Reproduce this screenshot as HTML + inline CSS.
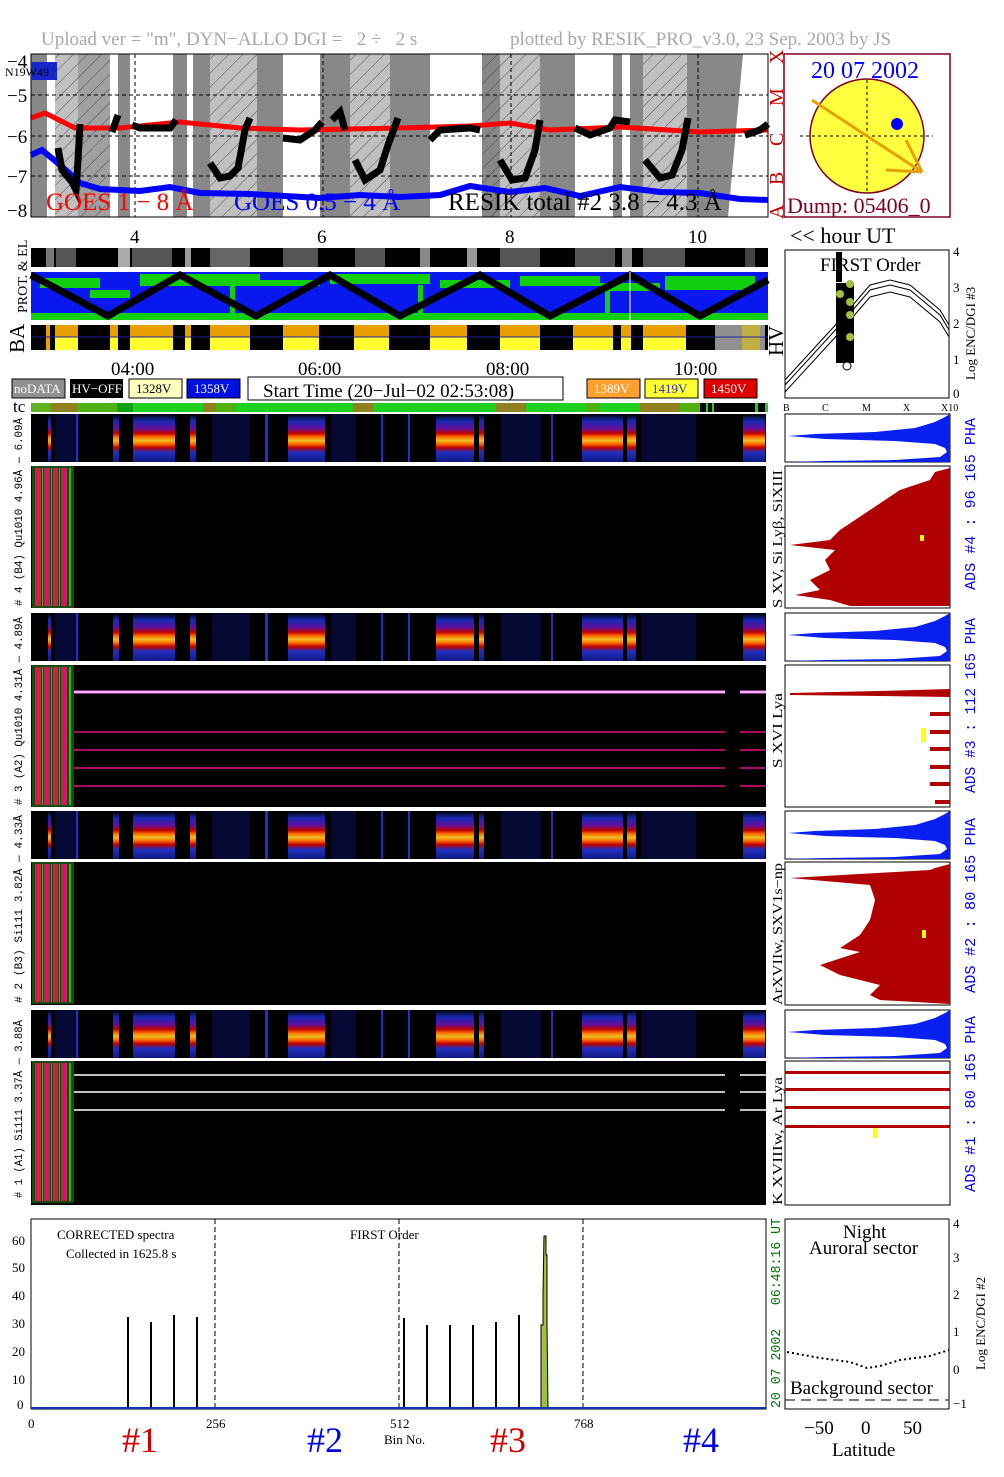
<!DOCTYPE html>
<html><head><meta charset="utf-8"><style>
html,body{margin:0;padding:0;background:#fff;}
svg{display:block;font-family:"Liberation Serif","DejaVu Serif",serif;}
</style></head><body>
<svg width="1004" height="1477" viewBox="0 0 1004 1477" xmlns="http://www.w3.org/2000/svg">
<defs>
<pattern id="hat" width="10" height="10" patternUnits="userSpaceOnUse" patternTransform="rotate(45)"><rect width="10" height="10" fill="none"/><line x1="0" y1="0" x2="0" y2="10" stroke="#333" stroke-width="0.8"/></pattern>
<linearGradient id="ga" x1="0" y1="0" x2="0" y2="1">
<stop offset="0" stop-color="#000"/><stop offset="0.15" stop-color="#1828b0"/><stop offset="0.3" stop-color="#6010a0"/><stop offset="0.4" stop-color="#c00000"/><stop offset="0.48" stop-color="#ff7000"/><stop offset="0.55" stop-color="#e8c020"/><stop offset="0.62" stop-color="#ff7000"/><stop offset="0.7" stop-color="#c00000"/><stop offset="0.8" stop-color="#2030c0"/><stop offset="1" stop-color="#101880"/></linearGradient>
<g id="pha">
<rect x="0" y="0" width="735" height="48" fill="#000"/>
<rect x="24" y="0" width="24" height="48" fill="#0a1470" opacity="0.45"/>
<rect x="181" y="0" width="38" height="48" fill="#0a1470" opacity="0.45"/>
<rect x="300" y="0" width="25" height="48" fill="#0a1470" opacity="0.45"/>
<rect x="470" y="0" width="40" height="48" fill="#0a1470" opacity="0.45"/>
<rect x="610" y="0" width="55" height="48" fill="#0a1470" opacity="0.45"/>
<rect x="102" y="0" width="42" height="48" fill="url(#ga)"/>
<rect x="257" y="0" width="37" height="48" fill="url(#ga)"/>
<rect x="405" y="0" width="38" height="48" fill="url(#ga)"/>
<rect x="551" y="0" width="41" height="48" fill="url(#ga)"/>
<rect x="17" y="0" width="3" height="48" fill="url(#ga)"/>
<rect x="82" y="0" width="6" height="48" fill="url(#ga)"/>
<rect x="159" y="0" width="6" height="48" fill="url(#ga)"/>
<rect x="448" y="0" width="5" height="48" fill="url(#ga)"/>
<rect x="596" y="0" width="9" height="48" fill="url(#ga)"/>
<rect x="712" y="0" width="22" height="48" fill="url(#ga)"/>
<rect x="45" y="0" width="2" height="48" fill="#2030c0"/>
<rect x="234" y="0" width="3" height="48" fill="#2030c0"/>
<rect x="350" y="0" width="2" height="48" fill="#2030c0"/>
<rect x="377" y="0" width="2" height="48" fill="#2030c0"/>
<rect x="520" y="0" width="2" height="48" fill="#2030c0"/>
</g>
<g id="strip">
<rect x="0" y="0" width="42" height="142" fill="#1a4a10"/>
<rect x="3" y="2" width="6" height="138" fill="#d0204a"/>
<rect x="12" y="2" width="6" height="138" fill="#c81e60"/>
<rect x="21" y="2" width="5" height="138" fill="#d0204a"/>
<rect x="29" y="2" width="6" height="138" fill="#c81e60"/>
<rect x="10" y="2" width="1" height="138" fill="#20c020"/>
<rect x="19" y="2" width="1" height="138" fill="#20c020"/>
<rect x="27" y="2" width="1" height="138" fill="#20c020"/>
<rect x="37" y="2" width="2" height="138" fill="#20c020"/>
</g>
<g id="rpha">
<rect x="0" y="0" width="165" height="48" fill="#fff" stroke="#000"/>
<polygon points="165,0 160,3 150,8 130,14 90,18 30,20 3,22 40,25 110,27 150,30 160,34 162,38 155,43 110,46 40,47 0,48 165,48" fill="#0a20f0"/>
</g>
</defs>

<text x="41" y="45" font-size="19" fill="#a8a8a8" xml:space="preserve">Upload ver = "m", DYN−ALLO DGI =   2 ÷   2 s</text>
<text x="510" y="45" font-size="19" fill="#a8a8a8">plotted by RESIK_PRO_v3.0, 23 Sep. 2003 by JS</text>

<rect x="31" y="54" width="737" height="163" fill="#fff"/>
<g>
<rect x="31" y="54" width="16" height="163" fill="#888"/>
<rect x="55" y="54" width="23" height="163" fill="#c0c0c0"/>
<rect x="78" y="54" width="32" height="163" fill="#a0a0a0"/>
<rect x="118" y="54" width="12" height="163" fill="#888"/>
<rect x="173" y="54" width="14" height="163" fill="#888"/>
<rect x="193" y="54" width="17" height="163" fill="#888"/>
<rect x="210" y="54" width="47" height="163" fill="#c0c0c0"/>
<rect x="257" y="54" width="26" height="163" fill="#888"/>
<rect x="320" y="54" width="30" height="163" fill="#888"/>
<rect x="350" y="54" width="40" height="163" fill="#c0c0c0"/>
<rect x="390" y="54" width="40" height="163" fill="#888"/>
<rect x="482" y="54" width="18" height="163" fill="#888"/>
<rect x="500" y="54" width="40" height="163" fill="#c0c0c0"/>
<rect x="540" y="54" width="35" height="163" fill="#888"/>
<rect x="613" y="54" width="9" height="163" fill="#888"/>
<rect x="630" y="54" width="13" height="163" fill="#888"/>
<rect x="643" y="54" width="44" height="163" fill="#c0c0c0"/>
<rect x="687" y="54" width="26" height="163" fill="#888"/>
<polygon points="713,54 743,54 728,217 713,217" fill="#888"/>
<rect x="55" y="54" width="55" height="163" fill="url(#hat)"/>
<rect x="210" y="54" width="47" height="163" fill="url(#hat)"/>
<rect x="350" y="54" width="40" height="163" fill="url(#hat)"/>
<rect x="482" y="54" width="58" height="163" fill="url(#hat)"/>
<rect x="643" y="54" width="44" height="163" fill="url(#hat)"/>
</g>
<g stroke="#000" stroke-dasharray="4,3" stroke-width="1" fill="none">
<line x1="31" y1="95" x2="768" y2="95"/><line x1="31" y1="136" x2="768" y2="136"/><line x1="31" y1="176" x2="768" y2="176"/>
<line x1="135" y1="54" x2="135" y2="217"/><line x1="323" y1="54" x2="323" y2="217"/><line x1="511" y1="54" x2="511" y2="217"/><line x1="698" y1="54" x2="698" y2="217"/>
</g>
<polyline points="31,118 45,113 75,128 120,128 180,122 240,128 300,130 400,128 470,126 510,123 550,130 620,127 700,132 768,130" fill="none" stroke="#ff0000" stroke-width="5"/>
<polyline points="31,155 42,150 60,165 80,183 100,189 140,191 170,187 200,193 250,194 320,198 360,195 400,197 440,195 470,186 510,192 545,188 580,196 620,187 660,192 700,193 740,199 768,200" fill="none" stroke="#0000ff" stroke-width="6"/>
<g fill="none" stroke="#000" stroke-width="7">
<polyline points="58,148 62,170 72,182 76,190 78,160 80,124"/>
<polyline points="112,132 118,115"/>
<polyline points="132,125 140,128 170,128 176,120"/>
<polyline points="210,163 220,178 230,176 238,168 245,130 250,118"/>
<polyline points="283,138 300,140 315,130 322,122"/>
<polyline points="332,120 340,112 345,130"/>
<polyline points="355,160 365,180 380,170 388,145 398,118"/>
<polyline points="430,140 440,130 470,128 480,130"/>
<polyline points="500,160 512,180 525,178 535,150 540,120"/>
<polyline points="575,128 590,135 610,128 615,120 630,122"/>
<polyline points="645,160 660,178 672,175 682,150 688,118"/>
<polyline points="745,135 760,130 768,124"/>
</g>
<rect x="31" y="54" width="737" height="163" fill="none" stroke="#000"/>
<g font-size="19" fill="#000">
<text x="7" y="68">−4</text><text x="7" y="102">−5</text><text x="7" y="143">−6</text><text x="7" y="183">−7</text><text x="7" y="217">−8</text>
</g>
<rect x="31" y="62" width="26" height="18" fill="#1828c8"/>
<text x="5" y="76" font-size="12" fill="#000">N19W49</text>
<text x="46" y="210" font-size="25" fill="#ff0000">GOES 1 − 8 Å</text>
<text x="234" y="210" font-size="25" fill="#0000ff">GOES 0.5 − 4 Å</text>
<text x="448" y="210" font-size="25" fill="#000">RESIK total #2  3.8 − 4.3 Å</text>
<g font-size="20" fill="#c00000">
<text transform="translate(783,219) rotate(-90)">A</text>
<text transform="translate(783,185) rotate(-90)">B</text>
<text transform="translate(783,146) rotate(-90)">C</text>
<text transform="translate(783,106) rotate(-90)">M</text>
<text transform="translate(783,64) rotate(-90)">X</text>
</g>

<rect x="784" y="54" width="166" height="163" fill="#fff" stroke="#800020" stroke-width="1.5"/>
<text x="811" y="78" font-size="24" fill="#0000ff">20 07 2002</text>
<circle cx="867" cy="136" r="57" fill="#ffff40" stroke="#800020" stroke-width="1.5"/>
<line x1="800" y1="136" x2="933" y2="136" stroke="#000" stroke-dasharray="3,3"/>
<line x1="867" y1="80" x2="867" y2="192" stroke="#000" stroke-dasharray="3,3"/>
<line x1="812" y1="100" x2="922" y2="172" stroke="#e8a000" stroke-width="3"/>
<line x1="906" y1="140" x2="922" y2="172" stroke="#e8a000" stroke-width="3"/>
<line x1="886" y1="170" x2="922" y2="172" stroke="#e8a000" stroke-width="3"/>
<circle cx="897" cy="124" r="6" fill="#0000ff"/>
<text x="787" y="213" font-size="22" fill="#800020">Dump: 05406_0</text>

<g font-size="19" fill="#000">
<text x="130" y="243">4</text><text x="317" y="243">6</text><text x="505" y="243">8</text><text x="688" y="243">10</text>
<text x="790" y="243" font-size="22">&lt;&lt; hour UT</text>
<text x="111" y="375">04:00</text><text x="298" y="375">06:00</text><text x="486" y="375">08:00</text><text x="674" y="375">10:00</text>
</g>

<rect x="31" y="248" width="737" height="19" fill="#000"/>
<g fill="#777">
<rect x="46" y="248" width="8" height="19"/><rect x="56" y="248" width="20" height="19" fill="#555"/>
<rect x="118" y="248" width="12" height="19" fill="#aaa"/><rect x="132" y="248" width="40" height="19" fill="#555"/>
<rect x="185" y="248" width="6" height="19" fill="#999"/><rect x="210" y="248" width="40" height="19" fill="#666"/>
<rect x="283" y="248" width="35" height="19" fill="#555"/><rect x="355" y="248" width="30" height="19" fill="#555"/>
<rect x="420" y="248" width="10" height="19" fill="#888"/><rect x="467" y="248" width="10" height="19" fill="#999"/>
<rect x="500" y="248" width="40" height="19" fill="#555"/><rect x="575" y="248" width="40" height="19" fill="#555"/>
<rect x="622" y="248" width="10" height="19" fill="#888"/><rect x="643" y="248" width="42" height="19" fill="#555"/>
<rect x="745" y="248" width="10" height="19" fill="#444"/>
</g>
<rect x="31" y="272" width="737" height="48" fill="#0a18f0"/>
<rect x="31" y="313" width="737" height="7" fill="#10d010"/>
<g fill="#10d010">
<rect x="40" y="278" width="60" height="10"/><rect x="90" y="290" width="40" height="8"/><rect x="140" y="274" width="120" height="12"/>
<rect x="260" y="280" width="60" height="6"/><rect x="330" y="274" width="100" height="10"/><rect x="440" y="280" width="70" height="8"/>
<rect x="520" y="276" width="80" height="10"/><rect x="600" y="283" width="60" height="8"/><rect x="665" y="276" width="90" height="14"/>
<rect x="230" y="285" width="5" height="28"/><rect x="418" y="285" width="5" height="28"/><rect x="605" y="285" width="5" height="28"/>
</g>
<polyline points="31,275 108,316 180,275 256,316 330,275 400,316 480,275 550,316 630,275 700,316 768,280" fill="none" stroke="#000" stroke-width="7"/>
<line x1="630" y1="272" x2="630" y2="320" stroke="#fff"/>
<rect x="31" y="325" width="737" height="25" fill="#000"/>
<g>
<rect x="46" y="325" width="4" height="25" fill="#e8a000"/>
<rect x="55" y="325" width="23" height="12" fill="#e8a000"/><rect x="55" y="337" width="23" height="13" fill="#ffff30"/>
<rect x="110" y="325" width="8" height="12" fill="#e8a000"/><rect x="110" y="337" width="8" height="13" fill="#ffff30"/>
<rect x="130" y="325" width="43" height="12" fill="#e8a000"/><rect x="130" y="337" width="43" height="13" fill="#ffff30"/>
<rect x="185" y="325" width="6" height="12" fill="#e8a000"/><rect x="185" y="337" width="6" height="13" fill="#ffff30"/>
<rect x="210" y="325" width="40" height="12" fill="#e8a000"/><rect x="210" y="337" width="40" height="13" fill="#ffff30"/>
<rect x="283" y="325" width="36" height="12" fill="#e8a000"/><rect x="283" y="337" width="36" height="13" fill="#ffff30"/>
<rect x="354" y="325" width="35" height="12" fill="#e8a000"/><rect x="354" y="337" width="35" height="13" fill="#ffff30"/>
<rect x="430" y="325" width="37" height="12" fill="#e8a000"/><rect x="430" y="337" width="37" height="13" fill="#ffff30"/>
<rect x="500" y="325" width="40" height="12" fill="#e8a000"/><rect x="500" y="337" width="40" height="13" fill="#ffff30"/>
<rect x="573" y="325" width="40" height="12" fill="#e8a000"/><rect x="573" y="337" width="40" height="13" fill="#ffff30"/>
<rect x="621" y="325" width="10" height="12" fill="#e8a000"/><rect x="621" y="337" width="10" height="13" fill="#ffff30"/>
<rect x="643" y="325" width="43" height="12" fill="#e8a000"/><rect x="643" y="337" width="43" height="13" fill="#ffff30"/>
<rect x="715" y="325" width="50" height="25" fill="#909090"/>
<rect x="742" y="325" width="18" height="25" fill="#c0b040"/>
</g>
<line x1="31" y1="337" x2="768" y2="337" stroke="#2020a0"/>
<g font-size="19" fill="#000">
<text transform="translate(27,313) rotate(-90)" font-size="14">PROT. &amp; EL</text>
<text transform="translate(24,353) rotate(-90)" font-size="21">BA</text>
<text transform="translate(783,356) rotate(-90)" font-size="21">HV</text>
</g>

<rect x="12" y="379" width="53" height="19" fill="#909090" stroke="#000"/><text x="14" y="393" font-size="13" fill="#fff">noDATA</text>
<rect x="70" y="379" width="53" height="19" fill="#000"/><text x="72" y="393" font-size="13" fill="#fff">HV−OFF</text>
<rect x="129" y="379" width="53" height="19" fill="#ffffc0" stroke="#000"/><text x="136" y="393" font-size="13" fill="#000">1328V</text>
<rect x="187" y="379" width="53" height="19" fill="#0010e0" stroke="#000"/><text x="194" y="393" font-size="13" fill="#fff">1358V</text>
<rect x="248" y="377" width="315" height="23" fill="#fff" stroke="#000"/><text x="263" y="397" font-size="19" fill="#000">Start Time (20−Jul−02 02:53:08)</text>
<rect x="587" y="379" width="53" height="19" fill="#ffa030" stroke="#000"/><text x="594" y="393" font-size="13" fill="#fff">1389V</text>
<rect x="645" y="379" width="53" height="19" fill="#ffff30" stroke="#000"/><text x="652" y="393" font-size="13" fill="#3030d0">1419V</text>
<rect x="704" y="379" width="53" height="19" fill="#e00000" stroke="#000"/><text x="711" y="393" font-size="13" fill="#fff">1450V</text>

<text x="13" y="412" font-size="17">tc</text>
<rect x="31" y="403" width="737" height="9" fill="#20d020"/>
<g>
<rect x="31" y="403" width="20" height="9" fill="#60b020"/><rect x="51" y="403" width="26" height="9" fill="#908020"/>
<rect x="77" y="403" width="40" height="9" fill="#50b010"/><rect x="117" y="403" width="16" height="9" fill="#10a010"/>
<rect x="203" y="403" width="13" height="9" fill="#908020"/><rect x="216" y="403" width="20" height="9" fill="#50b010"/>
<rect x="353" y="403" width="20" height="9" fill="#908020"/><rect x="496" y="403" width="30" height="9" fill="#908020"/>
<rect x="526" y="403" width="26" height="9" fill="#20d020"/><rect x="586" y="403" width="14" height="9" fill="#50b010"/>
<rect x="640" y="403" width="40" height="9" fill="#908020"/><rect x="680" y="403" width="20" height="9" fill="#50b010"/>
<rect x="700" y="403" width="65" height="9" fill="#000"/>
<rect x="706" y="403" width="2" height="9" fill="#20d020"/><rect x="712" y="403" width="2" height="9" fill="#20d020"/><rect x="755" y="403" width="3" height="9" fill="#20d020"/>
</g>
<g font-size="10" fill="#000"><text x="783" y="411">B</text><text x="822" y="411">C</text><text x="862" y="411">M</text><text x="903" y="411">X</text><text x="941" y="411">X10</text></g>

<use href="#pha" x="31" y="414"/>
<rect x="31" y="466" width="735" height="142" fill="#000"/><use href="#strip" x="32" y="466"/>
<use href="#pha" x="31" y="613"/>
<rect x="31" y="665" width="735" height="142" fill="#000"/><use href="#strip" x="32" y="665"/>
<use href="#pha" x="31" y="811"/>
<rect x="31" y="862" width="735" height="143" fill="#000"/><use href="#strip" x="32" y="862"/>
<use href="#pha" x="31" y="1010"/>
<rect x="31" y="1061" width="735" height="144" fill="#000"/><use href="#strip" x="32" y="1061"/>
<g stroke-width="1.5">
<line x1="74" y1="692" x2="766" y2="692" stroke="#ff60ff" stroke-width="3"/>
<line x1="74" y1="692" x2="766" y2="692" stroke="#fff" stroke-width="1"/>
<line x1="74" y1="732" x2="766" y2="732" stroke="#e01080"/>
<line x1="74" y1="750" x2="766" y2="750" stroke="#e01080"/>
<line x1="74" y1="768" x2="766" y2="768" stroke="#e01080"/>
<line x1="74" y1="786" x2="766" y2="786" stroke="#e01080"/>
<line x1="74" y1="1075" x2="766" y2="1075" stroke="#fff"/>
<line x1="74" y1="1092" x2="766" y2="1092" stroke="#fff"/>
<line x1="74" y1="1110" x2="766" y2="1110" stroke="#fff"/>
</g>
<rect x="725" y="680" width="15" height="120" fill="#000"/>
<rect x="725" y="1068" width="15" height="50" fill="#000"/>

<g font-family="Liberation Mono, DejaVu Sans Mono, monospace" font-size="11" fill="#000">
<text transform="translate(22,606) rotate(-90)" textLength="188" lengthAdjust="spacingAndGlyphs"># 4 (B4) Qu1010 4.96Å — 6.09Å</text>
<text transform="translate(22,805) rotate(-90)" textLength="188" lengthAdjust="spacingAndGlyphs"># 3 (A2) Qu1010 4.31Å — 4.89Å</text>
<text transform="translate(22,1003) rotate(-90)" textLength="188" lengthAdjust="spacingAndGlyphs"># 2 (B3) Si111  3.82Å — 4.33Å</text>
<text transform="translate(22,1198) rotate(-90)" textLength="178" lengthAdjust="spacingAndGlyphs"># 1 (A1) Si111  3.37Å — 3.88Å</text>
</g>

<use href="#rpha" x="785" y="414"/>
<use href="#rpha" x="785" y="613"/>
<use href="#rpha" x="785" y="811"/>
<use href="#rpha" x="785" y="1010"/>
<rect x="785" y="466" width="165" height="142" fill="#fff" stroke="#000"/>
<polygon points="950,468 935,472 930,480 900,490 885,500 870,510 855,520 840,530 830,540 790,545 835,550 825,560 830,570 810,580 820,590 795,595 830,600 850,606 950,606" fill="#b00000"/>
<rect x="920" y="535" width="4" height="6" fill="#ffff00"/>
<rect x="785" y="665" width="165" height="142" fill="#fff" stroke="#000"/>
<polygon points="790,693 880,691 950,689 950,697 880,696 790,695" fill="#b00000"/>
<g fill="#b00000"><rect x="930" y="712" width="20" height="4"/><rect x="930" y="730" width="20" height="4"/><rect x="930" y="747" width="20" height="4"/><rect x="930" y="765" width="20" height="4"/><rect x="930" y="782" width="20" height="4"/><rect x="935" y="800" width="15" height="4"/></g>
<rect x="921" y="728" width="5" height="14" fill="#ffff00"/>
<rect x="785" y="862" width="165" height="143" fill="#fff" stroke="#000"/>
<polygon points="950,864 935,868 930,870 790,878 870,885 875,900 870,920 860,935 840,948 860,952 820,965 840,975 880,985 870,995 880,1000 950,1004" fill="#b00000"/>
<rect x="922" y="930" width="4" height="8" fill="#ffff00"/>
<rect x="785" y="1061" width="165" height="144" fill="#fff" stroke="#000"/>
<g fill="#b00000"><rect x="785" y="1071" width="165" height="3"/><rect x="785" y="1088" width="165" height="3"/><rect x="785" y="1106" width="165" height="3"/><rect x="785" y="1125" width="165" height="3"/></g>
<rect x="873" y="1128" width="4" height="10" fill="#ffff00"/>

<g font-size="14" fill="#000">
<text transform="translate(782,608) rotate(-90)" textLength="138" lengthAdjust="spacingAndGlyphs">S XV, Si Lyβ, SiXIII</text>
<text transform="translate(782,768) rotate(-90)" textLength="75" lengthAdjust="spacingAndGlyphs">S XVI Lya</text>
<text transform="translate(782,1005) rotate(-90)" textLength="142" lengthAdjust="spacingAndGlyphs">ArXVIIw, SXV1s−np</text>
<text transform="translate(782,1205) rotate(-90)" textLength="128" lengthAdjust="spacingAndGlyphs">K XVIIIw, Ar Lya</text>
</g>
<g font-family="Liberation Mono, DejaVu Sans Mono, monospace" font-size="15" fill="#0000ff" xml:space="preserve">
<text transform="translate(975,590) rotate(-90)" textLength="172" lengthAdjust="spacingAndGlyphs">ADS #4 :  96 165  PHA</text>
<text transform="translate(975,793) rotate(-90)" textLength="175" lengthAdjust="spacingAndGlyphs">ADS #3 : 112 165  PHA</text>
<text transform="translate(975,993) rotate(-90)" textLength="175" lengthAdjust="spacingAndGlyphs">ADS #2 :  80 165  PHA</text>
<text transform="translate(975,1192) rotate(-90)" textLength="176" lengthAdjust="spacingAndGlyphs">ADS #1 :  80 165  PHA</text>
</g>

<rect x="785" y="250" width="164" height="148" fill="#fff" stroke="#000"/>
<text x="820" y="271" font-size="19">FIRST Order</text>
<polyline points="785,380 840,320 870,285 890,280 910,285 940,310 949,325" fill="none" stroke="#000"/>
<polyline points="785,385 840,325 870,290 890,285 910,290 940,315 949,330" fill="none" stroke="#000"/>
<polyline points="785,392 840,332 870,297 890,292 910,297 940,322 949,337" fill="none" stroke="#000"/>
<rect x="836" y="252" width="6" height="30" fill="#000"/>
<rect x="836" y="283" width="18" height="80" fill="#000"/>
<g fill="#a0c040"><circle cx="850" cy="284" r="4"/><circle cx="840" cy="294" r="4"/><circle cx="850" cy="302" r="4"/><circle cx="850" cy="315" r="4"/><circle cx="850" cy="337" r="4"/></g>
<circle cx="847" cy="366" r="4" fill="#fff" stroke="#000"/>
<g font-size="13"><text x="953" y="256">4</text><text x="953" y="292">3</text><text x="953" y="328">2</text><text x="953" y="364">1</text><text x="953" y="398">0</text></g>
<text transform="translate(975,380) rotate(-90)" font-size="13">Log ENC/DGI #3</text>

<rect x="31" y="1219" width="735" height="190" fill="#fff" stroke="#000"/>
<g stroke="#000" stroke-dasharray="5,3"><line x1="215" y1="1219" x2="215" y2="1409"/><line x1="399" y1="1219" x2="399" y2="1409"/><line x1="583" y1="1219" x2="583" y2="1409"/></g>
<g stroke="#000" stroke-width="2">
<line x1="128" y1="1409" x2="128" y2="1317"/><line x1="151" y1="1409" x2="151" y2="1322"/><line x1="174" y1="1409" x2="174" y2="1315"/><line x1="197" y1="1409" x2="197" y2="1317"/>
<line x1="404" y1="1409" x2="404" y2="1318"/><line x1="427" y1="1409" x2="427" y2="1325"/><line x1="450" y1="1409" x2="450" y2="1325"/><line x1="473" y1="1409" x2="473" y2="1325"/><line x1="496" y1="1409" x2="496" y2="1322"/><line x1="519" y1="1409" x2="519" y2="1315"/>
</g>
<polygon points="541,1409 541,1325 543,1325 543,1294 544,1236 546,1236 546,1255 547,1255 547,1325 548,1409" fill="#a0c040" stroke="#000" stroke-width="1"/>
<line x1="31" y1="1408" x2="766" y2="1408" stroke="#1030c0" stroke-width="2"/>
<g font-size="13" fill="#000">
<text x="12" y="1245">60</text><text x="12" y="1272">50</text><text x="12" y="1300">40</text><text x="12" y="1328">30</text><text x="12" y="1356">20</text><text x="12" y="1384">10</text><text x="17" y="1409">0</text>
<text x="28" y="1428">0</text><text x="206" y="1428">256</text><text x="390" y="1428">512</text><text x="574" y="1428">768</text>
<text x="384" y="1444">Bin No.</text>
<text x="57" y="1239">CORRECTED spectra</text><text x="66" y="1258">Collected in  1625.8 s</text>
<text x="350" y="1239">FIRST Order</text>
</g>
<g font-size="36">
<text x="122" y="1452" fill="#d00000">#1</text><text x="307" y="1452" fill="#0000e0">#2</text><text x="490" y="1452" fill="#d00000">#3</text><text x="683" y="1452" fill="#0000e0">#4</text>
</g>
<text transform="translate(780,1408) rotate(-90)" font-family="Liberation Mono, monospace" font-size="14" fill="#007000" xml:space="preserve" textLength="190" lengthAdjust="spacingAndGlyphs">20 07 2002   06:48:16 UT</text>

<rect x="785" y="1219" width="164" height="190" fill="#fff" stroke="#000"/>
<text x="843" y="1238" font-size="19">Night</text>
<text x="809" y="1254" font-size="19">Auroral sector</text>
<polyline points="787,1352 820,1358 850,1362 867,1368 880,1366 900,1360 930,1356 949,1350" fill="none" stroke="#000" stroke-width="2" stroke-dasharray="2,3"/>
<text x="790" y="1394" font-size="19">Background sector</text>
<line x1="785" y1="1400" x2="949" y2="1400" stroke="#000" stroke-dasharray="10,6"/>
<g font-size="13"><text x="953" y="1228">4</text><text x="953" y="1262">3</text><text x="953" y="1299">2</text><text x="953" y="1336">1</text><text x="953" y="1374">0</text><text x="953" y="1408">−1</text></g>
<text transform="translate(985,1370) rotate(-90)" font-size="13">Log ENC/DGI #2</text>
<g font-size="19"><text x="804" y="1434">−50</text><text x="861" y="1434">0</text><text x="903" y="1434">50</text><text x="832" y="1456">Latitude</text></g>
</svg>
</body></html>
